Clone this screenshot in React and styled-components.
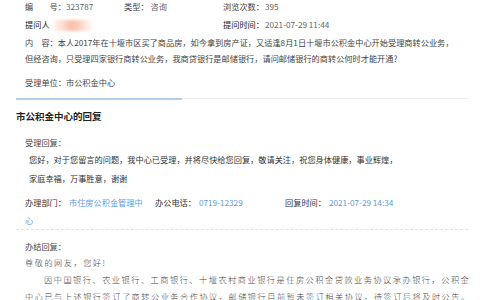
import React from "react";
import styled, { createGlobalStyle } from "styled-components";

const Global = createGlobalStyle`
  html, body { margin: 0; padding: 0; background: #fff; }
  body {
    font-family: "Noto Sans CJK SC", "Microsoft YaHei", "Noto Sans", sans-serif;
    font-size: 8.2px;
    color: #333;
    overflow: hidden;
  }
`;

const Page = styled.div`
  width: 452px;
  margin: -3px 0 0 16px;
`;

const Info = styled.div`
  padding-left: 9px;
`;

const MetaGrid = styled.div`
  display: grid;
  grid-template-columns: 99px 99px auto;
  line-height: 18px;
  white-space: nowrap;
`;

const Label = styled.span`
  color: ${(p) => (p.$strong ? "#1a1a1a" : "#444")};
`;

const Value = styled.span`
  color: #666;
  margin-left: ${(p) => p.$gap || 0}px;
`;

const Blurred = styled.span`
  display: inline-block;
  vertical-align: middle;
  width: 38px;
  height: 11px;
  margin-left: 4px;
  background: linear-gradient(90deg, #fff3ef 0%, #fcd9cb 25%, #f8bfa8 45%, #fbcdbb 65%, #fde9e1 85%, #fff7f4 100%);
  filter: blur(1.5px);
`;

const Content = styled.p`
  margin: 1px 0 0;
  max-width: 436px;
  line-height: 16px;
  color: #444;
`;

const UnitRow = styled.div`
  margin-top: 7px;
  line-height: 18px;
  color: #444;
`;

const Divider = styled.div`
  display: flex;
  align-items: flex-start;
  margin-top: 7px;
`;

const ActiveBar = styled.div`
  width: 166px;
  height: 2px;
  background: #b3cfee;
`;

const RestBar = styled.div`
  flex: 1;
  height: 1px;
  background: #ececec;
`;

const Heading = styled.h2`
  margin: 7px 0 0;
  font-size: 9.5px;
  line-height: 18px;
  font-weight: 700;
  color: #222;
`;

const Section = styled.div`
  border-bottom: ${(p) => (p.$dashed ? "1px dashed #e2e2e2" : "none")};
  padding-left: 9px;
`;

const SubTitle = styled.div`
  margin-top: ${(p) => p.$top}px;
  line-height: 16px;
  color: #444;
`;

const ReplyText = styled.p`
  margin: 0;
  padding-left: 4px;
  line-height: 19px;
  color: #333;
  max-width: 372px;
`;

const HandleGrid = styled.div`
  display: grid;
  grid-template-columns: 130px 130px auto;
  margin-top: 5px;
  line-height: 18px;
  color: #333;
`;

const Cell = styled.div`
  padding-right: 8px;
`;

const Link = styled.span`
  color: #5b9be0;
  margin-left: 3px;
`;

const Letter = styled.div`
  margin-right: -6px;
  font-weight: 300;
  letter-spacing: 1.5px;
  color: #444;
  line-height: 17px;
`;

const LetterP = styled.p`
  margin: 0;
  text-indent: ${(p) => (p.$indent ? "19px" : "0")};
`;

export default function App() {
  return (
    <>
      <Global />
      <Page>
        <Info>
          <MetaGrid>
            <div>
              <Label>编　　号：</Label>
              <Value>323787</Value>
            </div>
            <div>
              <Label>类型：</Label>
              <Value $gap={2}>咨询</Value>
            </div>
            <div>
              <Label>浏览次数：</Label>
              <Value $gap={1}>395</Value>
            </div>
            <div>
              <Label $strong>提问人</Label>
              <Blurred />
            </div>
            <div />
            <div>
              <Label $strong>提问时间：</Label>
              <Value $gap={1}>2021-07-29 11:44</Value>
            </div>
          </MetaGrid>
          <Content>
            内　容：本人2017年在十堰市区买了商品房，如今拿到房产证，又适逢8月1日十堰市公积金中心开始受理商转公业务，但经咨询，只受理四家银行商转公业务，我商贷银行是邮储银行，请问邮储银行的商转公何时才能开通?
          </Content>
          <UnitRow>受理单位：市公积金中心</UnitRow>
        </Info>
        <Divider>
          <ActiveBar />
          <RestBar />
        </Divider>
        <Heading>市公积金中心的回复</Heading>
        <Section $dashed>
          <SubTitle $top={9}>受理回复：</SubTitle>
          <ReplyText>
            您好，对于您留言的问题，我中心已受理，并将尽快给您回复，敬请关注，祝您身体健康，事业辉煌，家庭幸福，万事胜意，谢谢
          </ReplyText>
          <HandleGrid>
            <Cell>
              办理部门：<Link>市住房公积金管理中心</Link>
            </Cell>
            <Cell>
              办公电话：<Link>0719-12329</Link>
            </Cell>
            <Cell>
              回复时间：<Link>2021-07-29 14:34</Link>
            </Cell>
          </HandleGrid>
        </Section>
        <Section>
          <SubTitle $top={8}>办结回复：</SubTitle>
          <Letter>
            <LetterP>尊敬的网友，您好!</LetterP>
            <LetterP $indent>
              因中国银行、农业银行、工商银行、十堰农村商业银行是住房公积金贷款业务协议承办银行，公积金中心已与上述银行签订了商转公业务合作协议，邮储银行目前暂未签订相关协议，待签订后将及时公告。
            </LetterP>
          </Letter>
        </Section>
      </Page>
    </>
  );
}
